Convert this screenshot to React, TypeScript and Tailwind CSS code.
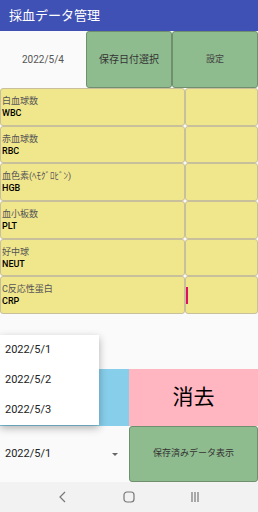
import React from "react";

const font = { fontFamily: 'Roboto, "Noto Sans CJK JP", sans-serif' };

const rows = [
  { ja: "白血球数", en: "WBC" },
  { ja: "赤血球数", en: "RBC" },
  { ja: "血色素(ﾍﾓｸﾞﾛﾋﾞﾝ)", en: "HGB" },
  { ja: "血小板数", en: "PLT" },
  { ja: "好中球", en: "NEUT" },
  { ja: "C反応性蛋白", en: "CRP" },
];

const dates = ["2022/5/1", "2022/5/2", "2022/5/3"];

export default function App() {
  return (
    <div className="relative w-[258px] h-[512px] flex flex-col bg-[#fafafa] overflow-hidden" style={font}>
      <div className="h-[31px] bg-[#3f51b5] flex items-center pl-[9px] text-white text-[13px]">
        採血データ管理
      </div>

      <div className="h-[57px] flex">
        <div className="w-[86px] flex items-center justify-center text-[10px] text-[#555]">2022/5/4</div>
        <button className="w-[86px] bg-[#8fbc8f] border border-[#6f8f6f] rounded-[3px] text-[10px] text-[#333]">
          保存日付選択
        </button>
        <button className="w-[86px] bg-[#8fbc8f] border border-[#6f8f6f] rounded-[3px] text-[9px] text-[#444]">
          設定
        </button>
      </div>

      <div className="h-[226px] grid grid-rows-6">
        {rows.map((r, i) => (
          <div key={r.en} className="flex">
            <div className="w-[185px] bg-[#f0e68c] border border-[#c8c09a] rounded-[3px] pl-[1px] pt-[6px] leading-[12px]">
              <div className="text-[9px] text-[#555]">{r.ja}</div>
              <div className="text-[9px] text-black font-medium">{r.en}</div>
            </div>
            <div className="flex-1 bg-[#f0e68c] border border-[#c8c09a] rounded-[3px] relative">
              {i === 5 && <div className="absolute left-0 top-[10px] w-[1.5px] h-[17px] bg-[#e0115f]"></div>}
            </div>
          </div>
        ))}
      </div>

      <div className="h-[55px]"></div>

      <div className="h-[57px] flex">
        <div className="w-[129px] bg-[#87ceeb]"></div>
        <div className="flex-1 bg-[#ffb6c1] flex items-center justify-center text-[21px] text-black">消去</div>
      </div>

      <div className="h-[56px] flex">
        <div className="w-[129px] flex items-center justify-between pl-[5px] pr-[11px]">
          <span className="text-[11px] text-[#222]">2022/5/1</span>
          <span className="w-0 h-0 border-l-[3px] border-r-[3px] border-t-[3px] border-l-transparent border-r-transparent border-t-[#666]"></span>
        </div>
        <button className="flex-1 bg-[#8fbc8f] border border-[#6f8f6f] rounded-[3px] text-[9px] text-[#333]">
          保存済みデータ表示
        </button>
      </div>

      <div className="flex-1 bg-[#f2f2f2] flex items-center justify-around px-[30px] text-[#666]">
        <svg width="10" height="12" viewBox="0 0 10 12"><path d="M7 1 L2 6 L7 11" fill="none" stroke="#777" strokeWidth="1.2" /></svg>
        <svg width="12" height="12" viewBox="0 0 12 12"><rect x="1" y="1" width="10" height="10" rx="3" fill="none" stroke="#777" strokeWidth="1.2" /></svg>
        <svg width="10" height="12" viewBox="0 0 10 12"><path d="M2 1 V11 M5 1 V11 M8 1 V11" stroke="#777" strokeWidth="1.2" /></svg>
      </div>

      <div className="absolute left-0 top-[335px] w-[99px] bg-white shadow-[0_3px_8px_rgba(0,0,0,0.3)] flex flex-col">
        {dates.map((d) => (
          <div key={d} className="h-[30px] flex items-center pl-[5px] text-[11px] text-[#222]">{d}</div>
        ))}
      </div>
    </div>
  );
}
